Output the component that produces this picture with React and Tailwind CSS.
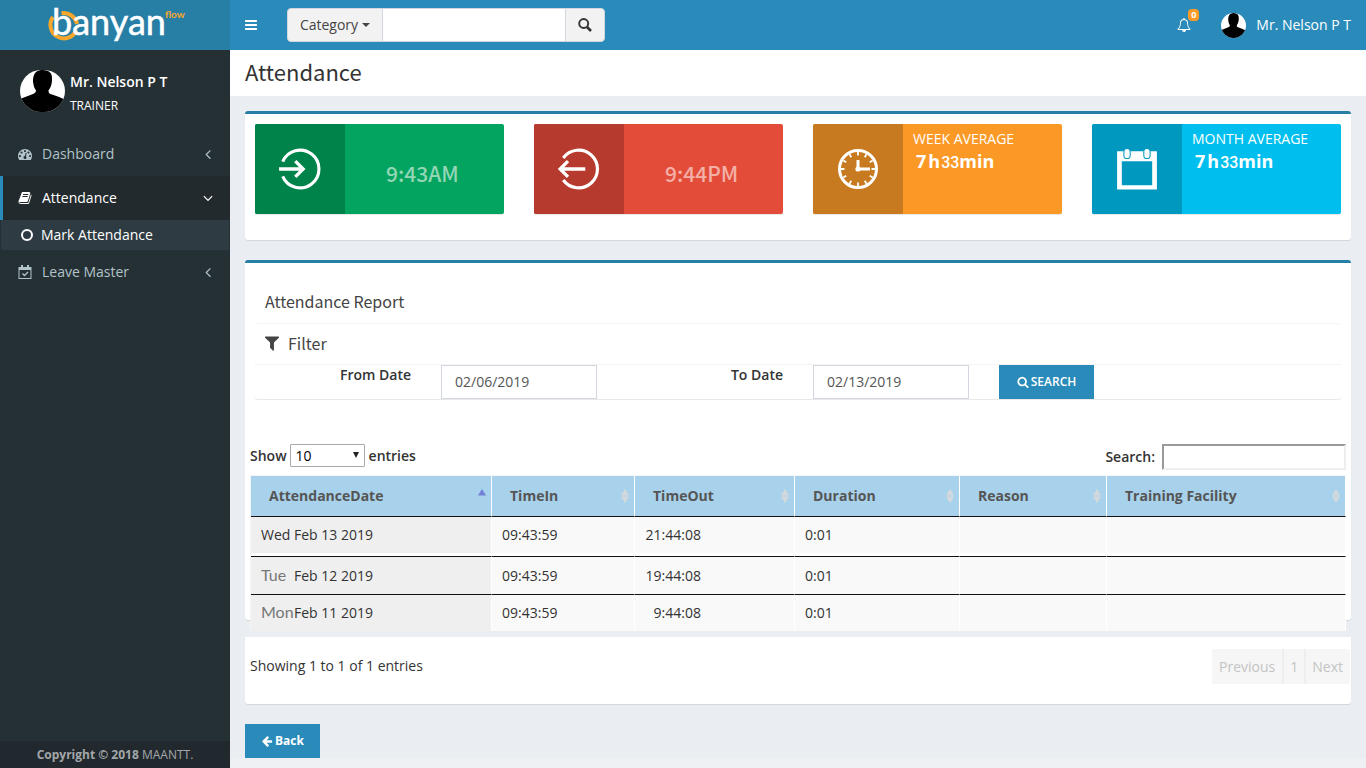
import React, { useState } from 'react';

const icons = {
  bars: 'M1664 1344v128q0 26-19 45t-45 19h-1408q-26 0-45-19t-19-45v-128q0-26 19-45t45-19h1408q26 0 45 19t19 45zm0-512v128q0 26-19 45t-45 19h-1408q-26 0-45-19t-19-45v-128q0-26 19-45t45-19h1408q26 0 45 19t19 45zm0-512v128q0 26-19 45t-45 19h-1408q-26 0-45-19t-19-45v-128q0-26 19-45t45-19h1408q26 0 45 19t19 45z',
  search: 'M1216 832q0-185-131.5-316.5t-316.5-131.5-316.5 131.5-131.5 316.5 131.5 316.5 316.5 131.5 316.5-131.5 131.5-316.5zm512 832q0 52-38 90t-90 38q-54 0-90-38l-343-342q-179 124-399 124-143 0-273.5-55.5t-225-150-150-225-55.5-273.5 55.5-273.5 150-225 225-150 273.5-55.5 273.5 55.5 225 150 150 225 55.5 273.5q0 220-124 399l343 343q37 37 37 90z',
  filter: 'M1595 295q17 41-14 70l-493 493v742q0 42-39 59-13 5-25 5-27 0-45-19l-256-256q-19-19-19-45v-486l-493-493q-31-29-14-70 17-39 59-39h1280q42 0 59 39z',
  arrowLeft: 'M1664 896v128q0 53-32.5 90.5t-84.5 37.5h-704l293 294q38 36 38 90t-38 90l-75 76q-37 37-90 37-52 0-91-37l-651-652q-37-37-37-90 0-52 37-91l651-650q38-38 91-38 52 0 90 38l75 74q38 38 38 91t-38 91l-293 293h704q52 0 84.5 37.5t32.5 90.5z',
  angleLeft: 'M1203 544q0 13-10 23l-393 393 393 393q10 10 10 23t-10 23l-50 50q-10 10-23 10t-23-10l-466-466q-10-10-10-23t10-23l466-466q10-10 23-10t23 10l50 50q10 10 10 23z',
  angleDown: 'M1395 736q0 13-10 23l-466 466q-10 10-23 10t-23-10l-466-466q-10-10-10-23t10-23l50-50q10-10 23-10t23 10l393 393 393-393q10-10 23-10t23 10l50 50q10 10 10 23z',
  dashboard: 'M384 1152q0-53-37.5-90.5t-90.5-37.5-90.5 37.5-37.5 90.5 37.5 90.5 90.5 37.5 90.5-37.5 37.5-90.5zm192-448q0-53-37.5-90.5t-90.5-37.5-90.5 37.5-37.5 90.5 37.5 90.5 90.5 37.5 90.5-37.5 37.5-90.5zm428 481l101-382q6-26-7.5-48.5t-38.5-29.5-48 6.5-30 39.5l-101 382q-60 5-107 43.5t-63 98.5q-20 77 20 146t117 89 146-20 89-117q16-60-6-117t-72-91zm660-33q0-53-37.5-90.5t-90.5-37.5-90.5 37.5-37.5 90.5 37.5 90.5 90.5 37.5 90.5-37.5 37.5-90.5zm-640-640q0-53-37.5-90.5t-90.5-37.5-90.5 37.5-37.5 90.5 37.5 90.5 90.5 37.5 90.5-37.5 37.5-90.5zm448 192q0-53-37.5-90.5t-90.5-37.5-90.5 37.5-37.5 90.5 37.5 90.5 90.5 37.5 90.5-37.5 37.5-90.5zm320 448q0 261-141 483-19 29-54 29h-1402q-35 0-54-29-141-221-141-483 0-182 71-348t191-286 286-191 348-71 348 71 286 191 191 286 71 348z',
  book: 'M1703 478q40 57 18 129l-275 906q-19 64-76.5 107.5t-122.5 43.5h-923q-77 0-148.5-53.5t-99.5-131.5q-24-67-2-127 0-4 3-27t4-37q1-8-3-21.5t-3-19.5q2-11 8-21t16.5-23.5 16.5-23.5q23-38 45-91.5t30-91.5q3-10 .5-30t-.5-28q3-11 17-28t17-23q21-36 42-92t25-90q1-9-2.5-32t.5-28q4-13 22-30.5t22-22.5q19-26 42.5-84.5t27.5-96.5q1-8-3-25.5t-2-26.5q2-8 9-18t18-23 17-21q8-12 16.5-30.5t15-35 16-36 19.5-32 26.5-23.5 36-11.5 47.5 5.5l-1 3q38-9 51-9h761q74 0 114 56t18 130l-274 906q-36 119-71.5 153.5t-128.5 34.5h-869q-27 0-38 15-11 16-1 43 24 70 144 70h923q29 0 56-15.5t35-41.5l300-987q7-22 5-57 38 15 59 43zm-1064 2q-4 13 2 22.5t20 9.5h608q13 0 25.5-9.5t16.5-22.5l21-64q4-13-2-22.5t-20-9.5h-608q-13 0-25.5 9.5t-16.5 22.5zm-83 256q-4 13 2 22.5t20 9.5h608q13 0 25.5-9.5t16.5-22.5l21-64q4-13-2-22.5t-20-9.5h-608q-13 0-25.5 9.5t-16.5 22.5z',
  bell: 'M912 1696q0-16-16-16-59 0-101.5-42.5t-42.5-101.5q0-16-16-16t-16 16q0 73 51.5 124.5t124.5 51.5q16 0 16-16zm-666-288h1300q-266-300-266-832 0-51-24-105t-69-103-121.5-80.5-169.5-31.5-169.5 31.5-121.5 80.5-69 103-24 105q0 532-266 832zm1482 0q0 52-38 90t-90 38h-448q0 106-75 181t-181 75-181-75-75-181h-448q-52 0-90-38t-38-90q50-42 91-88t85-119.5 74.5-158.5 50-206 19.5-260q0-152 117-282.5t307-158.5q-8-19-8-39 0-40 28-68t68-28 68 28 28 68q0 20-8 39 190 28 307 158.5t117 282.5q0 139 19.5 260t50 206 74.5 158.5 85 119.5 91 88z',
};

function Icon({ name, className = '' }) {
  return (
    <svg viewBox="0 0 1792 1792" fill="currentColor" className={`shrink-0 ${className}`} aria-hidden="true">
      <path d={icons[name]} />
    </svg>
  );
}

function CalendarCheckIcon() {
  return (
    <svg viewBox="0 0 14 14" className="h-3.5 w-3.5" fill="none" stroke="currentColor" aria-hidden="true">
      <rect x="1" y="2.5" width="12" height="11" />
      <path d="M1 4h12" strokeWidth="2" />
      <path d="M4 0v4M10 0v4" strokeWidth="2" />
      <path d="M4.5 8.5l2 2 3.5-3.5" strokeWidth="1.3" />
    </svg>
  );
}

function Avatar({ className }) {
  return (
    <svg viewBox="0 0 45 42" preserveAspectRatio="none" className={`shrink-0 rounded-full ${className}`} aria-hidden="true">
      <rect width="45" height="42" fill="#fff" />
      <path
        fill="#000"
        d="M23 0c6 0 9 3 9 8 0 3 0 4-.5 6-.5 3-2 5-3 6.500 0 2 .5 3 2 3.500 5 2 10 3 13 5V42H0V29c4-2 9-3 13-5 2-1 3-2 3-3.500-1-1.500-2-3-2.500-6-1-4-.5-7 .5-9.500C15.500 1.500 18 0 23 0z"
      />
    </svg>
  );
}

function Logo() {
  return (
    <a href="#home" aria-label="banyan flow" className="flex w-[230px] shrink-0 items-center justify-center bg-[#277fa6]">
      <svg width="140" height="50" viewBox="0 0 140 50" overflow="visible" aria-hidden="true">
        <path d="M8 17A13.500 13.500 0 1 0 31 31" fill="none" stroke="#f9a72b" strokeWidth="4" />
        <path d="M16.500 13.300A13.500 13.500 0 0 1 32 24" fill="none" stroke="#f9a72b" strokeWidth="4" />
        <text x="7" y="35" fill="#fff" stroke="#fff" strokeWidth="0.500" fontFamily="Lato, sans-serif" fontSize="36">banyan</text>
        <text x="120" y="18" fill="#f9a72b" fontFamily="Lato, sans-serif" fontSize="10" fontWeight="700">flow</text>
      </svg>
    </a>
  );
}

function NavItem({ icon, label, active }) {
  return (
    <a
      href={`#${label}`}
      className={`flex h-11 items-center border-l-[3px] pl-[15px] pr-[14px] ${
        active ? 'border-[#2a8bba] bg-[#222a2d] text-white' : 'border-transparent text-[#b2c3c9]'
      }`}
    >
      <span className="w-6">{icon}</span>
      <span className="flex-1">{label}</span>
      <Icon name={active ? 'angleDown' : 'angleLeft'} className="h-4 w-4" />
    </a>
  );
}

function Sidebar() {
  return (
    <aside className="flex w-[230px] shrink-0 flex-col bg-[#253035]">
      <div className="flex h-[82px] items-center gap-[5px] pl-5 text-white">
        <Avatar className="h-[42px] w-[45px]" />
        <div className="pt-[5px]">
          <p className="font-semibold">Mr. Nelson P T</p>
          <p className="mt-1 text-xs leading-5">TRAINER</p>
        </div>
      </div>
      <nav>
        <NavItem icon={<Icon name="dashboard" className="h-3.5 w-3.5" />} label="Dashboard" />
        <NavItem icon={<Icon name="book" className="h-3.5 w-3.5" />} label="Attendance" active />
        <a href="#mark" className="mx-px flex h-[30px] items-center gap-2 bg-[#2e3b42] pl-5 text-white">
          <span className="h-3 w-3 rounded-full border-2 border-white" />
          Mark Attendance
        </a>
        <NavItem icon={<CalendarCheckIcon />} label="Leave Master" />
      </nav>
      <footer className="mt-auto h-[27px] bg-[#22292e] text-center text-xs leading-[27px] text-[#a3a7a9]">
        <strong>Copyright © 2018</strong> MAANTT.
      </footer>
    </aside>
  );
}

function Header() {
  return (
    <header className="flex h-[50px] bg-[#2a8bba] text-white">
      <Logo />
      <button type="button" aria-label="Toggle menu" className="pl-3.5">
        <Icon name="bars" className="h-3.5 w-3.5" />
      </button>
      <form className="ml-[29px] flex h-[34px] w-[318px] self-center overflow-hidden rounded-sm border border-[#d2d6de] bg-[#f2f2f2] text-[#444]">
        <button type="button" className="flex w-[95px] items-center justify-center gap-1 border-r border-[#d2d6de]">
          Category
          <span className="border-x-4 border-t-4 border-x-transparent border-t-[#444]" />
        </button>
        <input aria-label="Search term" className="min-w-0 flex-1 bg-white px-3 outline-none" />
        <button type="button" aria-label="Search" className="flex w-[39px] items-center justify-center border-l border-[#d2d6de]">
          <svg viewBox="0 0 14 14" className="h-3.5 w-3.5" fill="none" stroke="#333" aria-hidden="true">
            <circle cx="5.700" cy="5.500" r="4.500" strokeWidth="1.900" />
            <path d="M9 9l4 4" strokeWidth="2.600" />
          </svg>
        </button>
      </form>
      <div className="ml-auto flex items-center pr-[15px]">
        <button type="button" aria-label="Notifications" className="relative mr-[30px]">
          <Icon name="bell" className="h-3.5 w-3.5" />
          <span className="absolute -top-[9px] left-[11px] h-3 w-[11px] rounded-sm bg-[#fb9a26] text-center text-[9px] font-bold leading-3">
            0
          </span>
        </button>
        <Avatar className="mr-2.5 h-[25px] w-[25px]" />
        <span>Mr. Nelson P T</span>
      </div>
    </header>
  );
}

function Tile({ dark, light, icon, children }) {
  return (
    <div className={`flex h-[90px] overflow-hidden rounded-[2px] shadow-[0_1px_1px_rgba(0,0,0,0.1)] ${light}`}>
      <div className={`flex w-[90px] shrink-0 items-center justify-center text-white ${dark}`}>{icon}</div>
      <div className="min-w-0 flex-1">{children}</div>
    </div>
  );
}

function ClockTime({ className, children }) {
  return (
    <p className={`pl-[41px] pt-[33px] font-['Noto_Sans_CJK_SC',sans-serif] text-[21px] font-medium leading-8 ${className}`}>
      {children}
    </p>
  );
}

function Average({ title }) {
  return (
    <div className="px-2.5 pt-[5px] text-white">
      <p>{title} AVERAGE</p>
      <p className="flex items-baseline pl-[3px] text-lg font-bold leading-6">
        <span className="mr-0.5">7</span>
        <span className="mr-px">h</span>
        <span className="font-['Roboto',sans-serif] text-base font-medium">33</span>
        <span>min</span>
      </p>
    </div>
  );
}

const signIn = (
  <svg width="44" height="44" viewBox="0 0 42 42" fill="none" stroke="currentColor" strokeWidth="3" aria-hidden="true">
    <path d="M4.500 14a18 18 0 1 1 0 14" />
    <path d="M1 21h22M16.500 13.500l7.500 7.500-7.500 7.500" strokeWidth="3.200" />
  </svg>
);

const signOut = (
  <svg width="44" height="44" viewBox="0 0 42 42" fill="none" stroke="currentColor" strokeWidth="3" aria-hidden="true">
    <path d="M6 10.500a18 18 0 1 1 0 21" />
    <path d="M27 21H4M10.500 13.500L3 21l7.500 7.500" strokeWidth="3.200" />
  </svg>
);

const clock = (
  <svg width="42" height="42" viewBox="0 0 42 42" fill="none" stroke="currentColor" aria-hidden="true">
    <circle cx="21" cy="21" r="18.500" strokeWidth="3" />
    {[0, 30, 60, 90, 120, 150, 180, 210, 240, 270, 300, 330].map((deg) => (
      <path key={deg} d="M21 4v3.500" strokeWidth="1.800" transform={`rotate(${deg} 21 21)`} />
    ))}
    <path d="M21 12v9h12" strokeWidth="3" />
    <circle cx="21" cy="21" r="2.600" fill="currentColor" stroke="none" />
  </svg>
);

const calendar = (
  <svg width="44" height="44" viewBox="0 0 42 42" fill="currentColor" aria-hidden="true">
    <path fillRule="evenodd" d="M2 4h38V40.500H2zM6.500 13.500v23h29v-23z" />
    <g stroke="#0098bf">
      <rect x="8.500" y="1.500" width="6" height="9.500" rx="3" />
      <rect x="27.500" y="1.500" width="6" height="9.500" rx="3" />
    </g>
  </svg>
);

const card = 'flex-col rounded-[3px] border-t-[3px] border-[#277fa6] bg-white shadow-[0_1px_1px_rgba(0,0,0,0.1)]';

const columns = ['AttendanceDate', 'TimeIn', 'TimeOut', 'Duration', 'Reason', 'Training Facility'];

const rows = [
  { day: 'Wed', date: 'Feb 13 2019', timeIn: '09:43:59', timeOut: '21:44:08', duration: '0:01' },
  { day: 'Tue', date: 'Feb 12 2019', timeIn: '09:43:59', timeOut: '19:44:08', duration: '0:01' },
  { day: 'Mon', date: 'Feb 11 2019', timeIn: '09:43:59', timeOut: '9:44:08', duration: '0:01' },
];

const rowStyles = [
  'h-10 border-b border-b-[#111] pb-1 shadow-[inset_0_-3px_0_#fff]',
  'h-[38px] border-b border-b-[#111]',
  'h-9',
];

function SortMark({ sorted }) {
  return (
    <svg width="8" height="14" viewBox="0 0 8 14" aria-hidden="true">
      <path d="M4 0l4 6.500H0z" fill={sorted ? '#7380d8' : '#d6d9dc'} />
      {!sorted && <path d="M4 14l4-6.500H0z" fill="#d6d9dc" />}
    </svg>
  );
}

function AttendanceTable() {
  return (
    <table className="w-full table-fixed border-separate border-spacing-0 border-l border-t border-[#f4f4f4]">
      <colgroup>
        <col className="w-[241px]" />
        <col className="w-[143px]" />
        <col className="w-[160px]" />
        <col className="w-[165px]" />
        <col className="w-[147px]" />
        <col />
      </colgroup>
      <thead>
        <tr className="h-[41px] bg-[#a8d1eb] text-left text-[#555]">
          {columns.map((name, i) => (
            <th key={name} scope="col" className="border-b border-r border-b-[#111] border-r-white pl-[18px] pr-[5px] font-bold">
              <span className="flex items-center justify-between">
                {name}
                <SortMark sorted={i === 0} />
              </span>
            </th>
          ))}
        </tr>
      </thead>
      <tbody>
        {rows.map((row, i) => {
          const cell = `border-r border-r-white px-2.5 ${rowStyles[i]}`;
          return (
            <tr key={row.day} className="bg-[#f9f9f9]">
              <td className={`${cell} bg-[#efefef]`}>
                <span className={`inline-block w-[33px] ${i > 0 ? "font-['Lato',sans-serif] text-base leading-4 text-[#777]" : ''}`}>
                  {row.day}
                </span>
                {row.date}
              </td>
              <td className={cell}>{row.timeIn}</td>
              <td className={cell}>
                <span className="inline-block w-14 text-right">{row.timeOut}</span>
              </td>
              <td className={cell}>{row.duration}</td>
              <td className={cell} />
              <td className={cell} />
            </tr>
          );
        })}
      </tbody>
    </table>
  );
}

function DateField({ id, label, value, onChange }) {
  return (
    <>
      <label htmlFor={id} className="px-[15px] text-right font-semibold">{label}</label>
      <div className="px-[15px]">
        <input
          id={id}
          value={value}
          onChange={(e) => onChange(e.target.value)}
          className="h-[34px] w-full border border-[#d2d6de] bg-white px-[13px] pb-0.5 text-[#555] outline-none"
        />
      </div>
    </>
  );
}

export default function App() {
  const [from, setFrom] = useState('02/06/2019');
  const [to, setTo] = useState('02/13/2019');

  return (
    <div className="flex min-h-screen flex-col bg-[#eaedf2] font-['Open_Sans',sans-serif] text-sm leading-5 text-[#333]">
      <Header />
      <div className="flex flex-1">
        <Sidebar />
        <main className="flex min-w-0 flex-1 flex-col">
          <h1 className="bg-white px-[15px] pb-2.5 pt-1.5 font-['Noto_Sans_CJK_SC',sans-serif] text-[22px] leading-[30px]">
            Attendance
          </h1>

          <div className="px-[15px] pt-[15px]">
            <section className={`${card} grid grid-cols-4 gap-[30px] px-2.5 pb-[26px] pt-2.5`}>
              <Tile dark="bg-[#00834b]" light="bg-[#02a45f]" icon={signIn}>
                <ClockTime className="text-[#93d6b6]">9:43AM</ClockTime>
              </Tile>
              <Tile dark="bg-[#b63b2e]" light="bg-[#e44c3a]" icon={signOut}>
                <ClockTime className="text-[#f4b0a7]">9:44PM</ClockTime>
              </Tile>
              <Tile dark="bg-[#c77a1f]" light="bg-[#fb9927]" icon={clock}>
                <Average title="WEEK" />
              </Tile>
              <Tile dark="bg-[#0098bf]" light="bg-[#00bfee]" icon={calendar}>
                <Average title="MONTH" />
              </Tile>
            </section>

            <section className={`${card} mt-5 flex`}>
              <h2 className="px-5 pt-[25px] font-['Noto_Sans_CJK_SC',sans-serif] text-base leading-[26px] text-[#444]">
                Attendance Report
              </h2>
              <div className="mx-2.5 mt-[9px] rounded-[3px] border-t border-[#f4f4f4] shadow-[0_1px_1px_rgba(0,0,0,0.1)]">
                <h3 className="flex h-[41px] items-center gap-[7px] border-b border-[#f4f4f4] px-2 pb-[3px] font-['Noto_Sans_CJK_SC',sans-serif] text-base text-[#444]">
                  <Icon name="filter" className="h-[18px] w-[18px]" />
                  Filter
                </h3>
                <form className="-mx-[15px] grid grid-cols-6">
                  <DateField id="from-date" label="From Date" value={from} onChange={setFrom} />
                  <DateField id="to-date" label="To Date" value={to} onChange={setTo} />
                  <div className="px-[15px]">
                    <button type="button" className="flex h-[34px] w-[95px] items-center justify-center gap-0.5 bg-[#2a8bba] text-xs font-semibold text-white">
                      <Icon name="search" className="h-3 w-3" />
                      SEARCH
                    </button>
                  </div>
                </form>
              </div>

              <div className="mx-[5px] mt-[45px] flex h-[31px] items-start justify-between font-semibold">
                <label className="flex items-center gap-[3px]">
                  Show
                  <span className="relative">
                    <select className="block h-[23px] w-[75px] appearance-none rounded-[1px] border border-[#a9a9a9] bg-white pl-[5px] font-normal text-black">
                      <option>10</option>
                    </select>
                    <span className="pointer-events-none absolute right-1.5 top-2 border-x-[3px] border-t-[6px] border-x-transparent border-t-[#222]" />
                  </span>
                  <span className="pl-px">entries</span>
                </label>
                <label className="flex items-center gap-[7px]">
                  Search:
                  <input className="h-[26px] w-[184px] border-2 border-b-[#eee] border-l-[#999] border-r-[#eee] border-t-[#999] bg-white px-1 font-normal outline-none" />
                </label>
              </div>

              {/* the table runs past the bottom edge of its card */}
              <div className="mx-[5px] -mb-[11px]">
                <AttendanceTable />
              </div>
            </section>

            <section className="mt-[17px] flex h-[67px] items-start justify-between rounded-b-[3px] bg-white pl-[5px] pt-3 shadow-[0_1px_1px_rgba(0,0,0,0.1)]">
              <p className="pt-[7px]">Showing 1 to 1 of 1 entries</p>
              <div className="mr-px flex h-[35px] divide-x-2 divide-[#eee] overflow-hidden rounded-[3px] bg-[#f6f6f6] text-[#c4c4c4]">
                <button type="button" className="px-[7px]">Previous</button>
                <button type="button" className="px-[6px]">1</button>
                <button type="button" className="pl-[6px] pr-[7px]">Next</button>
              </div>
            </section>

            <button type="button" className="mt-5 flex h-[34px] w-[75px] items-center justify-center gap-0.5 bg-[#2a8bba] text-xs font-bold text-white">
              <Icon name="arrowLeft" className="h-3 w-3" />
              Back
            </button>
          </div>
          <div className="flex-1 bg-[#eff0f4]" />
        </main>
      </div>
    </div>
  );
}
